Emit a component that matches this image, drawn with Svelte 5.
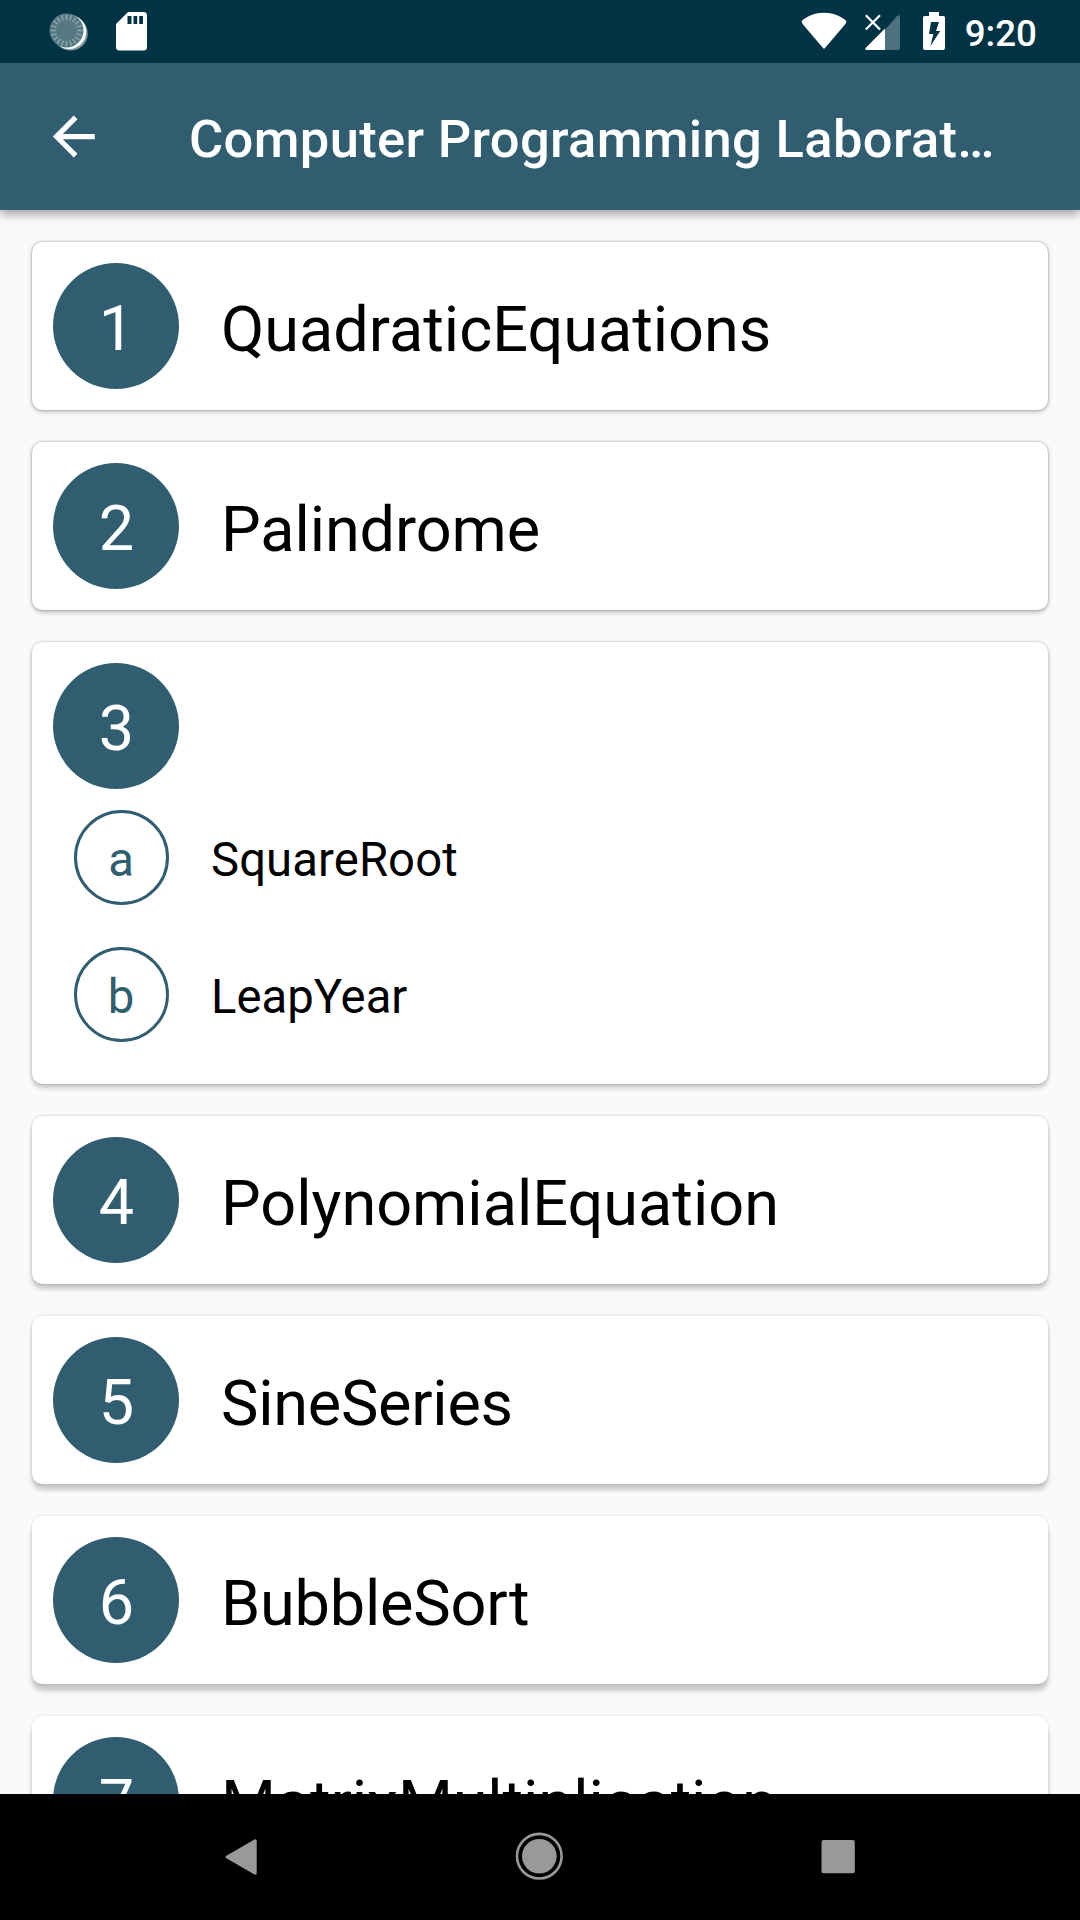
<script>
  const items = [
    { no: 1, title: 'QuadraticEquations', track: 0 },
    { no: 2, title: 'Palindrome', track: -0.1 },
    { no: 3, parts: [{ key: 'a', title: 'SquareRoot', track: 0.1 }, { key: 'b', title: 'LeapYear', track: 0 }] },
    { no: 4, title: 'PolynomialEquation', track: 0 },
    { no: 5, title: 'SineSeries', track: -0.25 },
    { no: 6, title: 'BubbleSort', track: -0.2 },
    { no: 7, title: 'MatrixMultiplication', track: -0.15 }
  ];
  const ticks = Array.from({ length: 20 }, (_, i) => i * 18);
  // Shadows drop further and lose their top edge towards the bottom of the screen
  const depth = [2, 2.5, 3.5, 5, 6, 7, 8];
  const edge = [0.34, 0.31, 0.24, 0.2, 0.17, 0.14, 0.12];
</script>

<div class="screen">
  <div class="status">
    <svg class="sync" viewBox="0 0 40 40">
      <circle cx="21.600" cy="21.400" r="17.200" fill="#7e979f" />
      <circle cx="20" cy="19.800" r="17.200" fill="#fff" />
      <circle cx="17.500" cy="18.500" r="17" fill="#567883" />
      {#each ticks as angle}
        <path d="M17.500 2.500v5.500" stroke="#93a9b0" stroke-width="1.300" transform="rotate({angle} 17.5 18.5)" />
      {/each}
    </svg>
    <svg class="sd" viewBox="0 0 31 39">
      <path fill="#fff" fill-rule="evenodd" d="M12 0H27.500Q31 0 31 3.500V35Q31 38.500 27.500 38.500H3.500Q0 38.500 0 35V12ZM11.500 4V12H15.500V4ZM17.500 4V12H21.200V4ZM23.200 4V12H27V4Z" />
    </svg>
    <span class="grow"></span>
    <svg class="wifi" viewBox="0 0 46 38">
      <path fill="#fff" d="M.5 9.300C6 4 14 .8 23 .8S40 4 45.500 9.300Q45 11 44 12.500L24 36Q23 37.500 22 36L2 12.500Q1 11 .5 9.300Z" />
    </svg>
    <svg class="signal" viewBox="0 0 36 37">
      <path fill="#4f717d" d="M20 15.500 32 2.200Q35 0 35 2.500V34Q35 36 33 36H20Z" />
      <path fill="#fff" d="M20 14.500V36H1.500Q-.5 35.500 .8 33.800Z" />
      <path stroke="#fff" stroke-width="2.200" d="M.8 1.300 15 15.500M15 1.300.8 15.500" />
    </svg>
    <svg class="battery" viewBox="0 0 22 38">
      <path fill="#fff" fill-rule="evenodd" d="M6 0H16V4H20.500Q22 4 22 5.500V36Q22 38 20 38H2Q0 38 0 36V5.500Q0 4 1.500 4H6ZM8 10 6 22H10.300L7.500 34 17.200 19H13L16 10Z" />
    </svg>
    <time>9:20</time>
  </div>

  <header>
    <svg class="back" viewBox="0.2 -0.5 42 43">
      <path fill="#fff" d="M42 18.375H10.050L24.720 3.700 21 0 0 21 21 42 24.700 38.300 10.050 23.625H42Z" />
    </svg>
    <h1>Computer Programming Laborat…</h1>
  </header>

  <main>
    {#each items as item, i}
      <section class="card" style="--drop: {depth[i]}px; --edge: {edge[i]}">
        <div class="row">
          <span class="badge">{item.no}</span>
          {#if item.title}<span class="title" style="--track: {item.track}px">{item.title}</span>{/if}
        </div>
        {#each item.parts ?? [] as part}
          <div class="part">
            <span class="letter">{part.key}</span>
            <span class="name" style="--track: {part.track}px">{part.title}</span>
          </div>
        {/each}
      </section>
    {/each}
  </main>

  <nav>
    <svg viewBox="0 0 48 48"><path fill="#999" stroke="#999" stroke-width="3" stroke-linejoin="round" d="M10.100 24 38.200 7.800V40.200Z" /></svg>
    <svg viewBox="0 0 48 48">
      <circle cx="23.300" cy="23.200" r="22.300" fill="none" stroke="#999" stroke-width="2.600" />
      <circle cx="23.300" cy="23.200" r="17.300" fill="#999" />
    </svg>
    <svg viewBox="0 0 48 48"><rect x="6.500" y="7" width="33.300" height="33.300" rx="2" fill="#999" /></svg>
  </nav>
</div>

<style>
  :global(body) { margin: 0; }
  .screen {
    width: 1080px;
    height: 1920px;
    display: flex;
    flex-direction: column;
    overflow: hidden;
    background: #fafafa;
    font-family: Roboto, sans-serif;
  }
  svg { display: block; flex: none; overflow: visible; }
  .status {
    box-sizing: border-box;
    height: 63px;
    flex: none;
    display: flex;
    align-items: flex-start;
    padding: 12px 43px 0 49px;
    background: #003344;
  }
  .grow { flex: 1; }
  .sync { width: 40px; height: 40px; }
  .sd { width: 31px; height: 39px; margin-left: 27px; }
  .wifi { width: 46px; height: 38px; margin-right: 18px; }
  .signal { width: 36px; height: 37px; margin: 2px 22px 0 0; }
  .battery { width: 22px; height: 38px; margin-right: 20px; }
  time {
    color: #fff;
    font-size: 36.75px;
    font-weight: 500;
    line-height: 43px;
  }
  header {
    height: 147px;
    flex: none;
    display: flex;
    align-items: center;
    padding-left: 53px;
    background: #305d70;
    box-shadow: 0 4px 10px rgba(0, 0, 0, .38);
    z-index: 1;
  }
  .back { width: 42px; height: 43px; }
  h1 {
    margin: 0 0 0 94px;
    padding-top: 4px;
    color: #fff;
    font-size: 52.5px;
    font-weight: 500;
    line-height: 62px;
    letter-spacing: .34px;
    white-space: nowrap;
  }
  main {
    flex: 1;
    min-height: 0;
    overflow: hidden;
    display: flex;
    flex-direction: column;
    gap: 32px;
    padding: 32px 32px 0;
  }
  .card {
    box-sizing: border-box;
    flex: none;
    min-height: 168px;
    padding: 21px;
    border-radius: 10.5px;
    background: #fff;
    box-shadow: 0 var(--drop) 5px rgba(0, 0, 0, .2), 0 0 3px rgba(0, 0, 0, var(--edge));
  }
  .row { display: flex; align-items: center; gap: 42px; }
  .badge, .letter {
    box-sizing: border-box;
    flex: none;
    display: flex;
    align-items: center;
    justify-content: center;
    padding-top: 5px;
    border-radius: 50%;
  }
  .badge {
    width: 126px;
    height: 126px;
    padding-left: 1px;
    color: #fff;
    background: #305d70;
    font-size: 63px;
  }
  .title, .name { color: #000; letter-spacing: var(--track); }
  .title { padding-top: 7px; font-size: 63px; line-height: 74px; }
  .part {
    display: flex;
    align-items: center;
    gap: 42px;
    margin: 21px 0 0 21px;
  }
  .part + .part { margin-top: 42px; }
  .part:last-child { margin-bottom: 21px; }
  .letter {
    width: 95px;
    height: 95px;
    padding-right: 1px;
    border: 3px solid #305d70;
    color: #305d70;
    font-size: 47.25px;
  }
  .name { padding-top: 5px; font-size: 47.25px; line-height: 56px; }
  nav {
    height: 126px;
    flex: none;
    display: flex;
    align-items: center;
    justify-content: center;
    gap: 251px;
    background: #000;
    z-index: 1;
  }
  nav svg { width: 48px; height: 48px; }
</style>
